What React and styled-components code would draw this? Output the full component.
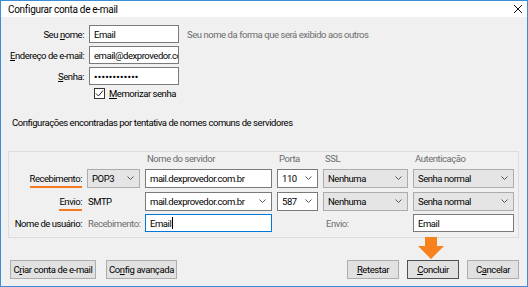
import React from 'react'
import styled, { createGlobalStyle } from 'styled-components'

const GlobalStyle = createGlobalStyle`
  html, body {
    margin: 0;
    padding: 0;
    background: #ffffff;
  }
  body {
    font-family: Roboto, 'Liberation Sans', sans-serif;
    font-size: 9.5px;
    letter-spacing: -0.45px;
    color: #000000;
  }
`

const Window = styled.div`
  position: relative;
  width: 528px;
  height: 287px;
  box-sizing: border-box;
  border: 1px solid #3b8dd6;
  background: #f0f0f0;
  display: flex;
  flex-direction: column;
  overflow: hidden;
`

const TitleBar = styled.div`
  height: 16px;
  flex-shrink: 0;
  background: #ffffff;
  display: flex;
  align-items: center;
  justify-content: space-between;
  padding: 0 4px 0 7px;
  font-size: 10px;
  letter-spacing: -0.3px;
`

const CloseIcon = () => (
  <svg width="10" height="10" viewBox="0 0 10 10">
    <path d="M1 1 L9 9 M9 1 L1 9" stroke="#111" strokeWidth="1" fill="none" />
  </svg>
)

const Body = styled.div`
  flex: 1;
  display: flex;
  flex-direction: column;
  padding: 8px 8px 0 7px;
`

const TopForm = styled.div`
  display: grid;
  grid-template-columns: 74px 90px auto;
  column-gap: 5px;
  row-gap: 3px;
  align-items: center;
  padding-left: 2px;
`

const Label = styled.label`
  text-align: ${p => (p.left ? 'left' : 'right')};
  white-space: nowrap;
  color: ${p => (p.muted ? '#6d6d6d' : '#000')};
  span.acc { text-decoration: underline; }
`

const Marked = styled.span`
  display: inline-block;
  line-height: 12px;
  border-bottom: 2px solid #f47b20;
  padding-bottom: 1px;
  margin-top: 5px;
`

const TextInput = styled.div`
  height: ${p => p.h || 18}px;
  box-sizing: border-box;
  background: #ffffff;
  border: 1px solid ${p => (p.focused ? '#0078d7' : '#7a7a7a')};
  display: flex;
  align-items: center;
  padding: 0 4px;
  overflow: hidden;
  white-space: nowrap;
  letter-spacing: ${p => (p.secret ? '0.3px' : 'inherit')};
  font-weight: ${p => (p.secret ? 'bold' : 'normal')};
`

const Caret = styled.span`
  display: inline-block;
  width: 1px;
  height: 12px;
  background: #000;
  margin-left: 1px;
`

const Hint = styled.span`
  color: #6d6d6d;
  white-space: nowrap;
  padding-left: 3px;
`

const CheckRow = styled.div`
  display: flex;
  align-items: center;
  gap: 4px;
  margin: 3px 0 0 86px;
`

const Box = styled.span`
  width: 11px;
  height: 11px;
  box-sizing: border-box;
  border: 1px solid #333;
  background: #fff;
  display: flex;
  align-items: center;
  justify-content: center;
`

const Info = styled.div`
  margin: 18px 0 0 4px;
  white-space: nowrap;
`

const Group = styled.div`
  margin-top: 23px;
  border: 1px solid #dcdcdc;
  padding: 0 4px 5px 5px;
  display: grid;
  grid-template-columns: 68px 53px 127px 41px 85px 101px;
  column-gap: 5px;
  row-gap: 3px;
  align-items: center;
`

const ColHead = styled.div`
  color: #6d6d6d;
  white-space: nowrap;
  grid-column: ${p => p.col};
  padding-left: ${p => p.pad || 2}px;
  height: 13px;
  line-height: 13px;
`

const Select = styled.div`
  height: 19px;
  box-sizing: border-box;
  background: ${p => (p.white ? '#ffffff' : '#e5e5e5')};
  border: 1px solid ${p => (p.white ? '#7a7a7a' : '#acacac')};
  display: flex;
  align-items: center;
  justify-content: space-between;
  padding: 0 5px 0 4px;
  white-space: nowrap;
`

const Chevron = () => (
  <svg width="7" height="4" viewBox="0 0 7 4">
    <path d="M0.5 0.5 L3.5 3.5 L6.5 0.5" stroke="#555" strokeWidth="1" fill="none" />
  </svg>
)

const Plain = styled.div`
  padding-left: ${p => p.pad || 1}px;
  white-space: nowrap;
  color: ${p => (p.muted ? '#6d6d6d' : '#000')};
`

const Footer = styled.div`
  margin-top: auto;
  margin-bottom: 7px;
  display: flex;
  align-items: center;
  padding-left: 2px;
`

const Button = styled.button`
  font-family: inherit;
  font-size: 9.5px;
  letter-spacing: -0.4px;
  height: 19px;
  width: ${p => p.w}px;
  margin-right: ${p => p.gap || 0}px;
  margin-left: ${p => (p.push ? 'auto' : '0')};
  padding: 0;
  background: #e1e1e1;
  border: 1px solid ${p => (p.primary ? '#505050' : '#adadad')};
  color: #000;
  white-space: nowrap;
  span { text-decoration: underline; }
`

const Arrow = styled.svg`
  position: absolute;
  left: 417px;
  top: 236px;
`

const Acc = ({ children }) => <span className="acc">{children}</span>

const Sel = ({ children, white }) => (
  <Select white={white}>
    <span>{children}</span>
    <Chevron />
  </Select>
)

export default function App() {
  return (
    <>
      <GlobalStyle />
      <Window>
        <TitleBar>
          <span>Configurar conta de e-mail</span>
          <CloseIcon />
        </TitleBar>
        <Body>
          <TopForm>
            <Label>Seu <Acc>n</Acc>ome:</Label>
            <TextInput>Email</TextInput>
            <Hint>Seu nome da forma que será exibido aos outros</Hint>
            <Label><Acc>E</Acc>ndereço de e-mail:</Label>
            <TextInput>email@dexprovedor.com.br</TextInput>
            <span />
            <Label><Acc>S</Acc>enha:</Label>
            <TextInput secret>••••••••••••</TextInput>
            <span />
          </TopForm>
          <CheckRow>
            <Box>
              <svg width="9" height="9" viewBox="0 0 9 9">
                <path d="M1 4.5 L3.5 7 L8 1.5" stroke="#222" strokeWidth="1" fill="none" />
              </svg>
            </Box>
            <Label left><Acc>M</Acc>emorizar senha</Label>
          </CheckRow>
          <Info>Configurações encontradas por tentativa de nomes comuns de servidores</Info>
          <Group>
            <ColHead col="3">Nome do servidor</ColHead>
            <ColHead col="4">Porta</ColHead>
            <ColHead col="5">SSL</ColHead>
            <ColHead col="6">Autenticação</ColHead>

            <Label><Marked>Recebimento:</Marked></Label>
            <Sel>POP3</Sel>
            <TextInput h={19}>mail.dexprovedor.com.br</TextInput>
            <Sel white>110</Sel>
            <Sel>Nenhuma</Sel>
            <Sel>Senha normal</Sel>

            <Label><Marked>Envio:</Marked></Label>
            <Plain>SMTP</Plain>
            <Sel white>mail.dexprovedor.com.br</Sel>
            <Sel white>587</Sel>
            <Sel>Nenhuma</Sel>
            <Sel>Senha normal</Sel>

            <Label>Nome de usuário:</Label>
            <Plain muted>Recebimento:</Plain>
            <TextInput focused>Email<Caret /></TextInput>
            <span />
            <Plain muted pad={3}>Envio:</Plain>
            <TextInput>Email</TextInput>
          </Group>
          <Footer>
            <Button w={86} gap={10}>C<span>r</span>iar conta de e-mail</Button>
            <Button w={71}>Co<span>n</span>fig avançada</Button>
            <Button push w={52} gap={8}><span>R</span>etestar</Button>
            <Button primary w={52} gap={8}><span>C</span>oncluir</Button>
            <Button w={52}>C<span>a</span>ncelar</Button>
          </Footer>
        </Body>
        <Arrow width="26" height="22" viewBox="0 0 26 22">
          <polygon points="7,0 19,0 19,9 26,9 13,22 0,9 7,9" fill="#f7821e" />
        </Arrow>
      </Window>
    </>
  )
}
